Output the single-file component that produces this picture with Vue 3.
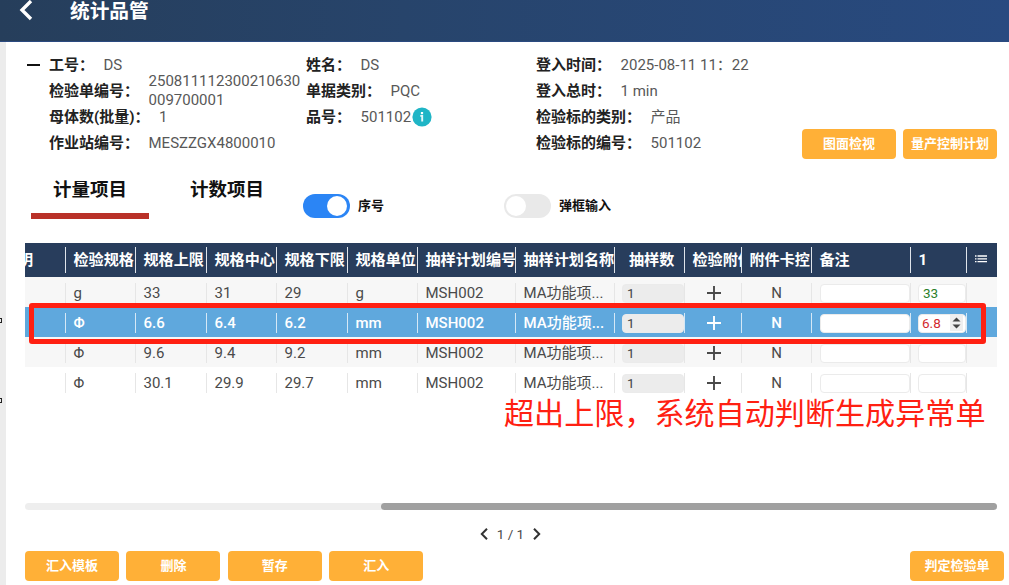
<template>
  <div class="page">
    <header class="topbar">
      <svg class="back" viewBox="0 0 14 22" width="14" height="22">
        <path d="M12 2 L3 11 L12 20" fill="none" stroke="#fff" stroke-width="3.4" />
      </svg>
      <h1>统计品管</h1>
    </header>

    <div class="body">
      <aside class="edge">
        <i class="mark first"></i>
        <i class="mark second"></i>
      </aside>

      <main class="content">
        <section class="info">
          <span class="collapse"></span>
          <div v-for="(group, g) in infos" :key="g" class="info-col">
            <div v-for="item in group" :key="item.label" class="info-row">
              <span class="label">{{ item.label }}</span>
              <span class="value" :class="{ long: item.long }">{{ item.value }}</span>
              <svg v-if="item.tip" class="tip" viewBox="0 0 20 20" width="20" height="20">
                <circle cx="10" cy="10" r="9.6" fill="#1fb5c6" />
                <rect x="8.9" y="5" width="2.2" height="2.2" fill="#fff" />
                <path d="M8.3 8.9 H10.2 V14.4" fill="none" stroke="#e4f8fa" stroke-width="1.9" />
              </svg>
            </div>
          </div>
          <div class="info-actions">
            <button class="btn">图面检视</button>
            <button class="btn">量产控制计划</button>
          </div>
        </section>

        <section class="tabs">
          <div class="tab active">计量项目</div>
          <div class="tab">计数项目</div>
          <div class="switch-item serial">
            <span class="switch on"></span>
            <span>序号</span>
          </div>
          <div class="switch-item">
            <span class="switch"></span>
            <span>弹框输入</span>
          </div>
        </section>

        <section class="table">
          <div class="tr head">
            <div v-for="(col, i) in columns" :key="i" class="th" :class="'c' + i"><span>{{ col }}</span></div>
            <div class="th menu">
              <svg viewBox="0 0 12 8" width="12" height="8">
                <path d="M0 1 H1.5 M2.5 1 H12 M0 3.8 H1.5 M2.5 3.8 H12 M0 6.6 H1.5 M2.5 6.6 H12" stroke="#fff" stroke-width="1.3" />
              </svg>
            </div>
          </div>
          <div v-for="(row, r) in rows" :key="r" class="tr" :class="{ selected: r === 1 }">
            <div class="td"></div>
            <div class="td">{{ row.spec }}</div>
            <div class="td">{{ row.upper }}</div>
            <div class="td">{{ row.center }}</div>
            <div class="td">{{ row.lower }}</div>
            <div class="td">{{ row.unit }}</div>
            <div class="td">MSH002</div>
            <div class="td">MA功能项...</div>
            <div class="td count"><span class="field gray">1</span></div>
            <div class="td center plus">
              <svg viewBox="0 0 14 14" width="14" height="14">
                <path d="M7 0 V14 M0 7 H14" stroke="currentColor" stroke-width="1.9" />
              </svg>
            </div>
            <div class="td center">N</div>
            <div class="td note"><span class="field"></span></div>
            <div class="td result">
              <span class="field" :class="row.state">
                {{ row.result }}
                <svg v-if="row.state === 'bad'" class="spin" viewBox="0 0 13 16" width="13" height="16">
                  <rect width="13" height="16" fill="#efefef" />
                  <path d="M2.5 6.5 L6.5 2.6 L10.5 6.5 Z M2.5 9.5 L6.5 13.4 L10.5 9.5 Z" fill="#444" />
                </svg>
              </span>
            </div>
            <div class="td last"></div>
          </div>
          <div class="highlight"></div>
          <div class="remark">超出上限，系统自动判断生成异常单</div>
        </section>

        <div class="scrollbar"><div class="thumb"></div></div>

        <div class="pager">
          <svg viewBox="0 0 8 12" width="8" height="12">
            <path d="M7 0.8 L1.8 6 L7 11.2" fill="none" stroke="#333" stroke-width="2" />
          </svg>
          <span>1 / 1</span>
          <svg viewBox="0 0 8 12" width="8" height="12">
            <path d="M1 0.8 L6.2 6 L1 11.2" fill="none" stroke="#333" stroke-width="2" />
          </svg>
        </div>

        <footer class="footer">
          <button v-for="name in actions" :key="name" class="btn">{{ name }}</button>
          <button class="btn judge">判定检验单</button>
        </footer>
      </main>
    </div>
  </div>
</template>

<script setup>
import { ref } from 'vue'

const infos = ref([
  [
    { label: '工号：', value: 'DS' },
    { label: '检验单编号：', value: '250811112300210630009700001', long: true },
    { label: '母体数(批量)：', value: '1' },
    { label: '作业站编号：', value: 'MESZZGX4800010' }
  ],
  [
    { label: '姓名：', value: 'DS' },
    { label: '单据类别：', value: 'PQC' },
    { label: '品号：', value: '501102', tip: true }
  ],
  [
    { label: '登入时间：', value: '2025-08-11 11：22' },
    { label: '登入总时：', value: '1 min' },
    { label: '检验标的类别：', value: '产品' },
    { label: '检验标的编号：', value: '501102' }
  ]
])

const columns = [
  '明', '检验规格', '规格上限', '规格中心', '规格下限', '规格单位',
  '抽样计划编号', '抽样计划名称', '抽样数', '检验附件', '附件卡控', '备注', '1'
]

const rows = ref([
  { spec: 'g', upper: '33', center: '31', lower: '29', unit: 'g', result: '33', state: 'good' },
  { spec: 'Φ', upper: '6.6', center: '6.4', lower: '6.2', unit: 'mm', result: '6.8', state: 'bad' },
  { spec: 'Φ', upper: '9.6', center: '9.4', lower: '9.2', unit: 'mm', result: '', state: '' },
  { spec: 'Φ', upper: '30.1', center: '29.9', lower: '29.7', unit: 'mm', result: '', state: '' }
])

const actions = ['汇入模板', '删除', '暂存', '汇入']
</script>

<style>
body {
  margin: 0;
  overflow: hidden;
}
</style>

<style scoped>
.page {
  width: 1009px;
  height: 585px;
  display: flex;
  flex-direction: column;
  background: #fff;
  overflow: hidden;
  font-family: Roboto, "Noto Sans CJK SC", sans-serif;
  font-size: 15px;
  line-height: 18px;
  color: #4a4a4a;
}
* {
  box-sizing: border-box;
}
.topbar {
  height: 42px;
  flex: none;
  display: flex;
  align-items: flex-start;
  background: linear-gradient(90deg, #263e5b 0%, #27446b 40%, #284a80 100%);
  border-bottom: 1px solid #2b4a80;
}
.back {
  margin: -1px 0 0 19px;
}
h1 {
  margin: 0 0 0 37px;
  font-size: 19.7px;
  line-height: 24px;
  font-weight: 700;
  color: #fff;
}
.body {
  flex: 1;
  display: flex;
}
.edge {
  width: 6px;
  background: #ececec;
  position: relative;
}
.mark {
  position: absolute;
  left: -3px;
  width: 5px;
  height: 5px;
  border: 1px solid #222;
}
.first {
  top: 276px;
}
.second {
  top: 356px;
}
.content {
  flex: 1;
  display: flex;
  flex-direction: column;
  padding: 10px 5px 5px 19px;
}

/* 表头信息 */
.info {
  height: 117px;
  display: flex;
  position: relative;
}
.collapse {
  width: 13px;
  height: 2px;
  margin: 12px 9px 0 2px;
  background: #111;
}
.info-col {
  width: 257px;
}
.info-col:nth-child(3) {
  width: 230px;
}
.info-row {
  height: 26.1px;
  display: flex;
  align-items: center;
  white-space: nowrap;
}
.label {
  font-weight: 700;
  color: #222;
  margin-right: 9.5px;
}
.value {
  font-weight: 400;
  color: #585858;
}
.value.long {
  width: 153px;
  line-height: 19px;
  white-space: normal;
  word-break: break-all;
}
.tip {
  margin-left: 1px;
}
.info-actions {
  position: absolute;
  right: 7px;
  top: 77px;
  display: flex;
  gap: 7px;
}
.btn {
  width: 94px;
  height: 30px;
  padding: 0;
  border: none;
  border-radius: 4px;
  background: #ffb037;
  color: #fff;
  font-family: inherit;
  font-size: 13px;
  font-weight: 700;
  line-height: 28px;
}

/* 页签 */
.tabs {
  height: 74px;
  display: flex;
  padding-left: 6px;
  color: #111;
}
.tab {
  width: 118px;
  height: 50px;
  margin-right: 19px;
  font-size: 18.5px;
  line-height: 42px;
  font-weight: 700;
  text-align: center;
}
.tab.active {
  border-bottom: 6px solid #b93128;
}
.switch-item {
  height: 24px;
  margin-top: 25px;
  margin-left: -2px;
  display: flex;
  align-items: center;
  gap: 8px;
  font-size: 13px;
  font-weight: 700;
}
.serial {
  width: 203px;
}
.switch {
  width: 47px;
  height: 24px;
  border-radius: 12px;
  background: #e9e9e9;
  padding: 2px;
}
.switch::before {
  content: "";
  display: block;
  width: 20px;
  height: 20px;
  border-radius: 50%;
  background: #fff;
}
.switch.on {
  background: #2b85f5;
}
.switch.on::before {
  margin-left: 22px;
}

/* 表格 */
.table {
  width: 972px;
  height: 260px;
  position: relative;
}
.tr {
  display: grid;
  grid-template-columns: 41px 70px 71px 70px 71px 70px 98px 99px 70px 57px 70px 99px 56px 30px;
  height: 30px;
}
.tr:nth-child(even) {
  background: #f7f7f7;
}
.head {
  height: 34px;
  background: #283d5c;
  color: #fff;
  font-weight: 700;
}
.th {
  display: flex;
  align-items: center;
  margin: 4px 0;
  padding-left: 7.5px;
  border-right: 1px solid #dfe4ea;
  font-size: 15.1px;
  white-space: nowrap;
  overflow: hidden;
}
.c0 {
  padding-left: 0;
}
.c0 span {
  margin-left: -7px;
}
.c8 {
  padding-left: 14px;
}
.menu {
  padding-bottom: 2px;
  border-right: none;
}
.td {
  display: flex;
  align-items: center;
  margin: 6px 0 4px;
  padding-left: 7.5px;
  border-right: 1px solid #e6e6e6;
  white-space: nowrap;
}
.center {
  justify-content: center;
  padding-left: 0;
}
.plus {
  padding-left: 2px;
  padding-bottom: 1px;
}
.td.last {
  border-right: none;
}
.count {
  padding-left: 7px;
}
.note {
  padding-left: 8px;
}
.result {
  padding-left: 7px;
}
.field {
  width: 100%;
  height: 19px;
  display: flex;
  align-items: center;
  padding-left: 4px;
  border: 1px solid #ebebeb;
  border-radius: 4px;
  background: #fff;
  font-size: 13.5px;
  font-weight: 400;
}
.gray {
  background: #ececec;
  color: #444;
}
.good {
  color: #2b7f2b;
}
.bad {
  color: #d2282d;
  padding-left: 3px;
}
.spin {
  margin-left: auto;
  margin-right: 2px;
}
.tr.selected {
  background: #5fa8dd;
  color: #fff;
  font-weight: 500;
}
.selected .td {
  border-right-color: #d5e8f6;
}
.highlight {
  position: absolute;
  left: 4px;
  top: 60px;
  width: 957px;
  height: 41px;
  border: 5px solid #ff2012;
  border-radius: 3px;
}
.remark {
  position: absolute;
  left: 479px;
  top: 153px;
  font-family: "Noto Sans CJK SC", sans-serif;
  font-size: 30.1px;
  line-height: 30px;
  font-weight: 400;
  color: #ff2012;
  white-space: nowrap;
}

.scrollbar {
  width: 972px;
  height: 7px;
  border-radius: 4px;
  background: #eee;
}
.thumb {
  width: 616px;
  height: 7px;
  margin-left: auto;
  border-radius: 4px;
  background: #a0a0a0;
}
.pager {
  height: 41px;
  display: flex;
  align-items: center;
  justify-content: center;
  gap: 9px;
  padding: 6px 8px 0 0;
  font-size: 13.5px;
}
.footer {
  display: flex;
  gap: 7.4px;
}
.judge {
  margin-left: auto;
}
</style>
